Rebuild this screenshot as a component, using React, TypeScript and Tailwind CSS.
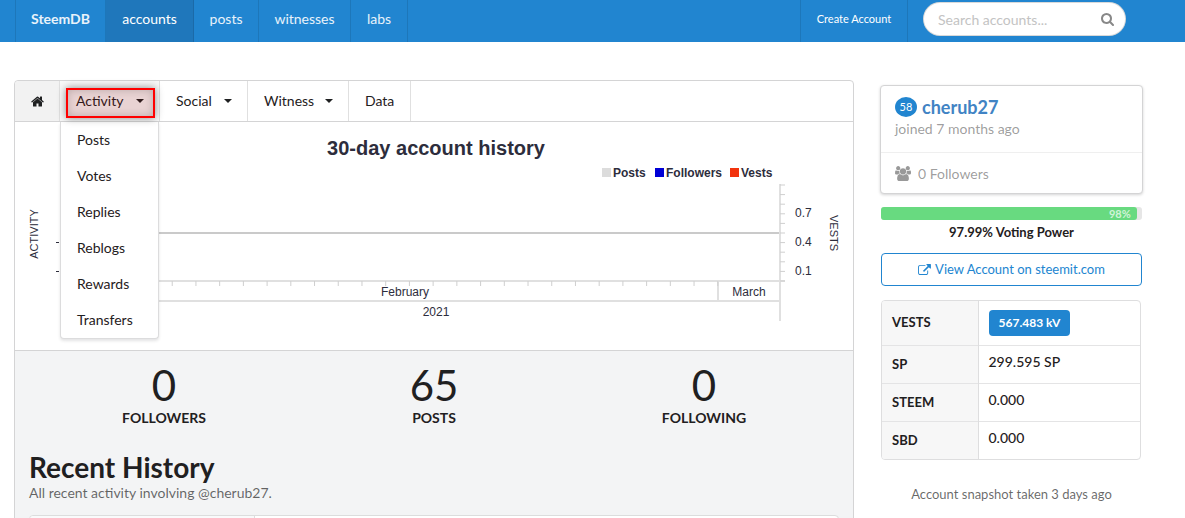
import { ReactNode } from "react";

const icons = {
  home: {
    box: "64 230 1664 1310",
    d: "M1472 992v480q0 26-19 45t-45 19h-384v-384h-256v384h-384q-26 0-45-19t-19-45v-480q0-1 .5-3t.5-3l575-474 575 474q1 2 1 6zm223-69l-62 74q-8 9-21 11h-3q-13 0-21-7l-692-577-692 577q-12 8-24 7-13-2-21-11l-62-74q-8-10-7-23.5t11-21.5l719-599q32-26 76-26t76 26l244 204v-195q0-14 9-23t23-9h192q14 0 23 9t9 23v408l219 182q10 8 11 21.5t-7 23.5z",
  },
  search: {
    box: "64 128 1664 1664",
    d: "M1216 832q0-185-131.5-316.5t-316.5-131.5-316.5 131.5-131.5 316.5 131.5 316.5 316.5 131.5 316.5-131.5 131.5-316.5zm512 832q0 52-38 90t-90 38q-54 0-90-38l-343-342q-179 124-399 124-143 0-273.5-55.5t-225-150-150-225-55.5-273.5 55.5-273.5 150-225 225-150 273.5-55.5 273.5 55.5 225 150 150 225 55.5 273.5q0 220-124 399l343 343q37 37 37 90z",
  },
  external: {
    box: "0 0 1792 1536",
    d: "M1408 928v320q0 119-84.5 203.5t-203.5 84.5h-832q-119 0-203.5-84.5t-84.5-203.5v-832q0-119 84.5-203.5t203.5-84.5h704q14 0 23 9t9 23v64q0 14-9 23t-23 9h-704q-66 0-113 47t-47 113v832q0 66 47 113t113 47h832q66 0 113-47t47-113v-320q0-14 9-23t23-9h64q14 0 23 9t9 23zm384-864v512q0 26-19 45t-45 19-45-19l-176-176-652 652q-10 10-23 10t-23-10l-114-114q-10-10-10-23t10-23l652-652-176-176q-19-19-19-45t19-45 45-19h512q26 0 45 19t19 45z",
  },
  users: {
    box: "64 0 1920 1792",
    d: "M657 896q-162 5-265 128h-134q-82 0-138-40.5t-56-118.5q0-353 124-353 6 0 43.5 21t97.5 42.5 119 21.5q67 0 133-23-5 37-5 66 0 159 90 256zm1071 637q0 120-73 189.5t-194 69.5h-874q-121 0-194-69.5t-73-189.5q0-53 3.5-103.5t14-109 26.5-108.5 43-97.5 62-81 85.5-53.5 111.5-20q10 0 43 21.5t73 48 107 48 135 21.5 135-21.5 107-48 73-48 43-21.5q61 0 111.5 20t85.5 53.5 62 81 43 97.5 26.5 108.5 14 109 3.5 103.5zm-1024-1277q0 106-75 181t-181 75-181-75-75-181 75-181 181-75 181 75 75 181zm704 384q0 159-112.5 271.5t-271.5 112.5-271.5-112.5-112.5-271.5 112.5-271.5 271.5-112.5 271.5 112.5 112.5 271.5zm576 225q0 78-56 118.5t-138 40.5h-134q-103-123-265-128 90-97 90-256 0-29-5-66 66 23 133 23 59 0 119-21.5t97.5-42.5 43.5-21q124 0 124 353zm-128-609q0 106-75 181t-181 75-181-75-75-181 75-181 181-75 181 75 75 181z",
  },
};

const Icon = ({
  name,
  className,
}: {
  name: keyof typeof icons;
  className: string;
}) => (
  <svg viewBox={icons[name].box} fill="currentColor" className={className} aria-hidden="true">
    <path d={icons[name].d} />
  </svg>
);

const Caret = () => (
  <svg viewBox="0 0 8 4" fill="currentColor" className="w-2 h-1" aria-hidden="true">
    <path d="M0 0h8L4 4z" />
  </svg>
);

const NavLink = ({
  children,
  className,
}: {
  children: ReactNode;
  className: string;
}) => (
  <a
    href="#"
    className={`flex items-center justify-center pb-1 border-r border-black/10 ${className}`}
  >
    {children}
  </a>
);

function Navbar() {
  return (
    <nav className="h-[42px] bg-[#2185d0] pl-[15px] pr-[43px] flex">
      <div className="flex border-l border-black/10">
        <NavLink className="w-[90px] text-white/90 font-bold">SteemDB</NavLink>
        <NavLink className="w-[88px] text-white bg-[#1f77bb]">accounts</NavLink>
        <NavLink className="w-[65px] text-white/90">posts</NavLink>
        <NavLink className="w-[92px] text-white/90">witnesses</NavLink>
        <NavLink className="w-[57px] text-white/90">labs</NavLink>
      </div>
      <div className="flex ml-auto border-l border-black/10">
        <NavLink className="w-[107px] text-white text-[11px]">Create Account</NavLink>
      </div>
      <form className="relative pl-[15px] pr-4 pt-[2px]">
        <input
          type="text"
          aria-label="Search accounts"
          placeholder="Search accounts..."
          className="block w-[203px] h-[34px] pl-[14px] pr-9 rounded-full border border-black/15 bg-white placeholder:text-[#c3c3c3]"
        />
        <button type="button" aria-label="Search" className="absolute right-7 top-[13px] text-[#888]">
          <Icon name="search" className="size-[13px]" />
        </button>
      </form>
    </nav>
  );
}

const activityLinks = ["Posts", "Votes", "Replies", "Reblogs", "Rewards", "Transfers"];

const tabClass = "flex items-center justify-between h-10 border-r border-[#e0e0e0]";

function AccountMenu() {
  return (
    <div className="flex border-b border-[#d4d4d5]">
      <a href="#" aria-label="Home" className={`${tabClass} w-[45px] px-4 bg-[#f2f2f2] rounded-tl`}>
        <Icon name="home" className="w-[13px] h-[11px] shrink-0" />
      </a>
      <div className="relative z-10">
        <button type="button" aria-expanded="true" className={`${tabClass} w-[100px] pl-4 pr-[15px] bg-[#f8f8f8]`}>
          Activity
          <Caret />
        </button>
        <ul className="absolute left-0 right-px top-[41px] bg-white border border-t-0 border-[#dcdcdd] rounded-b shadow-[0_2px_3px_rgba(34,36,38,0.12)]">
          {activityLinks.map((label) => (
            <li key={label}>
              <a href="#" className="flex items-center h-9 px-4">
                {label}
              </a>
            </li>
          ))}
        </ul>
        <div className="absolute left-[6px] right-[5px] top-[7px] bottom-[3px] border-2 border-[#ff0000] bg-[#900000]/15 shadow-[0_0_8px_rgba(0,0,0,0.45),inset_0_0_8px_rgba(0,0,0,0.2)] pointer-events-none" />
      </div>
      <button type="button" className={`${tabClass} w-[88px] pl-4 pr-[15px]`}>
        Social
        <Caret />
      </button>
      <button type="button" className={`${tabClass} w-[101px] pl-4 pr-[15px]`}>
        Witness
        <Caret />
      </button>
      <a href="#" className={`${tabClass} w-[62px] px-4`}>
        Data
      </a>
    </div>
  );
}

const days = Array.from({ length: 30 }, (_, i) => 14.9 + i * 23.72).filter((x) => x > 40);
const vestTicks = Array.from({ length: 11 }, (_, i) => 63 + i * 9.6);

function HistoryChart() {
  return (
    <svg
      viewBox="0 0 838 228"
      className="block w-full font-['Liberation_Sans',sans-serif]"
      fill="#2d2d3c"
      fontSize="12"
      role="img"
      aria-label="30-day account history"
    >
      <text x="421" y="33" fontSize="20" fontWeight="700" textAnchor="middle">
        30-day account history
      </text>

      <g fontWeight="700">
        <rect x="587" y="46" width="9" height="9" fill="#dcdcdc" />
        <text x="598" y="55">Posts</text>
        <rect x="640" y="46" width="9" height="9" fill="#0000d6" />
        <text x="651" y="55">Followers</text>
        <rect x="715" y="46" width="9" height="9" fill="#f2330d" />
        <text x="726" y="55">Vests</text>
      </g>

      {/* series */}
      <path d="M45 111H765" stroke="#cacaca" strokeWidth="2" />

      {/* date axis */}
      <g stroke="#e0e0e0" strokeWidth="2">
        <path d="M45 159H770M45 179H765M703 159V179" />
        <path d="M765 62V199" />
      </g>
      <g stroke="#cfcfcf">
        {days.map((x) => (
          <path key={x} d={`M${x} 159V164`} />
        ))}
        {vestTicks.map((y) => (
          <path key={y} d={`M765 ${y}H770`} />
        ))}
      </g>
      <path d="M41 120.500H44M41 149.500H44" stroke="#2d2d3c" />

      <text x="390" y="174" textAnchor="middle">February</text>
      <text x="734" y="174" textAnchor="middle">March</text>
      <text x="421" y="194" textAnchor="middle">2021</text>

      <text x="780" y="95">0.7</text>
      <text x="780" y="124">0.4</text>
      <text x="780" y="153">0.1</text>

      <g fontSize="11" textAnchor="middle">
        <text transform="translate(23 112) rotate(-90)">ACTIVITY</text>
        <text transform="translate(815 111) rotate(90)">VESTS</text>
      </g>
    </svg>
  );
}

const stats = [
  { value: "0", label: "Followers" },
  { value: "65", label: "Posts" },
  { value: "0", label: "Following" },
];

function AccountPanel() {
  return (
    <main className="flex-1 mt-[38px] border border-[#d4d4d5] rounded-t">
      <AccountMenu />
      <HistoryChart />
      <section className="border-t border-[#d4d4d5] bg-[#f3f4f5] px-[14px] pt-[13px]">
        <div className="grid grid-cols-3 text-center">
          {stats.map(({ value, label }) => (
            <div key={label}>
              <div className="text-[42px] leading-[42px]">{value}</div>
              <div className="mt-[2px] font-bold uppercase">{label}</div>
            </div>
          ))}
        </div>
        <h2 className="mt-[23px] text-[28px] leading-8 font-bold">Recent History</h2>
        <p className="text-black/60">All recent activity involving @cherub27.</p>
        <div className="mt-3 h-20 bg-white border border-[#dcdddd] rounded-t flex">
          <div className="w-[225px] bg-[#f9fafb] border-r border-[#dcdddd] rounded-tl" />
        </div>
      </section>
    </main>
  );
}

const balances = [
  { name: "SP", value: "299.595 SP" },
  { name: "STEEM", value: "0.000" },
  { name: "SBD", value: "0.000" },
];

const headClass = "w-24 px-[10px] bg-[#f7f7f7] border-r border-[#dededf] text-[13px] font-bold";

function Sidebar() {
  return (
    <aside className="w-[263px] mt-[43px]">
      <div className="bg-white border border-[#d4d4d5] rounded shadow-[0_1px_3px_#d4d4d5]">
        <div className="h-[67px] px-[14px] pt-[9px] border-b border-[#efefef]">
          <div className="flex items-center gap-[5px]">
            <span className="w-[22px] h-5 rounded-[50%] bg-[#2185d0] text-white text-[11px] flex items-center justify-center">
              58
            </span>
            <a href="#" className="text-lg leading-6 font-bold text-[#4183c4]">
              cherub27
            </a>
          </div>
          <div className="text-black/40">joined 7 months ago</div>
        </div>
        <div className="h-10 px-[14px] pt-px flex items-center gap-[7px] text-black/40">
          <Icon name="users" className="w-4 h-[15px]" />
          0 Followers
        </div>
      </div>

      <div className="px-px">
        <div className="mt-[13px] h-[13px] bg-[#e6e6e6] rounded-[3px]">
          <div className="w-[98%] h-full bg-[#68da80] rounded-[3px] pr-[6px] text-right text-[11px] leading-[13px] font-bold text-white/70">
            98%
          </div>
        </div>
        <div className="mt-[2px] text-center text-[13px] leading-5 font-bold">97.99% Voting Power</div>

        <a
          href="#"
          className="mt-[11px] h-[33px] flex items-center justify-center gap-1 border border-[#2185d0] rounded text-[13px] text-[#2185d0]"
        >
          <Icon name="external" className="w-[13px] h-[11px]" />
          View Account on steemit.com
        </a>

        <div className="mt-[14px] mr-px border border-[#dededf] rounded overflow-hidden">
          <table className="w-full text-left">
            <tbody>
              <tr className="h-11">
                <th scope="row" className={headClass}>
                  VESTS
                </th>
                <td className="px-[10px]">
                  <span className="inline-block px-[10px] py-1 rounded bg-[#2185d0] text-white text-xs leading-[18px] font-bold">
                    567.483 kV
                  </span>
                </td>
              </tr>
              {balances.map(({ name, value }) => (
                <tr key={name} className="h-[38px] border-t border-[#e4e4e5]">
                  <th scope="row" className={headClass}>
                    {name}
                  </th>
                  <td className="px-[10px] pb-1 font-medium">{value}</td>
                </tr>
              ))}
            </tbody>
          </table>
        </div>
        <p className="mt-6 text-center text-[13px] leading-5 text-black/60">
          Account snapshot taken 3 days ago
        </p>
      </div>
    </aside>
  );
}

export default function App() {
  return (
    <div className="h-screen overflow-hidden bg-white text-[#1f2021] text-sm font-['Lato',sans-serif]">
      <Navbar />
      <div className="flex items-start gap-[26px] pl-[14px] pr-[42px]">
        <AccountPanel />
        <Sidebar />
      </div>
    </div>
  );
}
